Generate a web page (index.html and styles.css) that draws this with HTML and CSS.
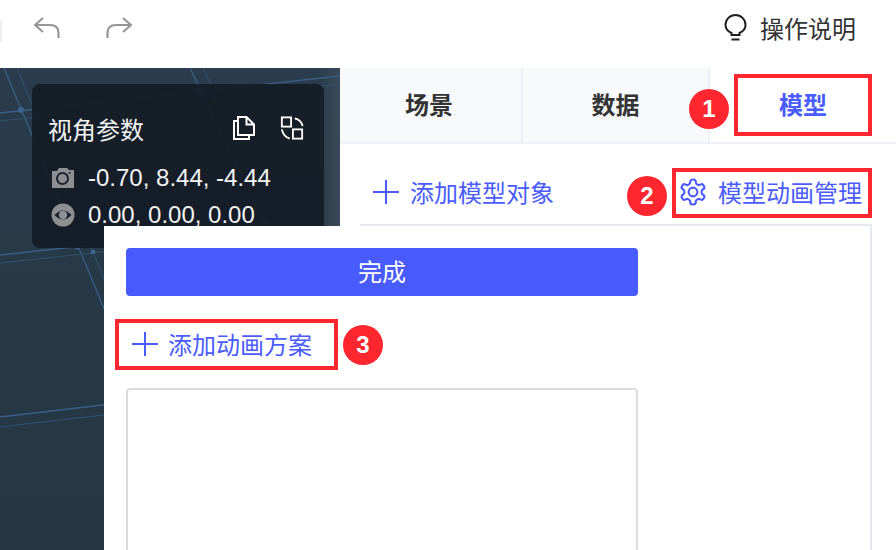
FILE: index.html
```html
<!DOCTYPE html>
<html lang="zh-CN">
<head>
<meta charset="utf-8">
<title>模型动画管理</title>
<link rel="stylesheet" href="styles.css">
</head>
<body>
<div class="app">
  <header class="topbar">
    <span class="edge-tab"></span>
    <div class="history">
      <svg class="history-icon" viewBox="0 0 26 22"><path d="M9 1 L1 8 L9 15 M1 8 H16 Q24.500 8 24.500 16 V21"/></svg>
      <svg class="history-icon" viewBox="0 0 26 22"><path d="M17 1 L25 8 L17 15 M25 8 H10 Q1.500 8 1.500 16 V21"/></svg>
    </div>
    <div class="help">
      <svg class="bulb" viewBox="0 0 24 28"><path d="M7.500 21 V19 C3.800 17.500 1.500 14.500 1.500 10.800 A10 9.800 0 0 1 21.500 10.800 C21.500 14.500 19.200 17.500 15.500 19 V21 Z M7.500 25.500 H15.500"/></svg>
      <span>操作说明</span>
    </div>
  </header>

  <main class="workspace">
    <section class="stage">
      <svg class="stage-grid" viewBox="0 0 340 482">
        <g class="grid-main">
          <path d="M0 45 L340 8"/>
          <path d="M0 187 L120 174"/>
          <path d="M0 349 L120 335"/>
          <path d="M4 0 L110 255"/>
          <path d="M190 0 L290 210"/>
        </g>
        <g class="grid-faint">
          <path d="M0 53 L340 16"/>
          <path d="M0 195 L120 182"/>
          <path d="M0 359 L120 345"/>
          <path d="M17 0 L125 262"/>
          <path d="M203 0 L300 205"/>
        </g>
        <circle class="grid-node" cx="21" cy="42" r="3"/>
        <circle class="grid-node" cx="200" cy="22" r="3"/>
        <circle class="grid-node" cx="37" cy="49" r="2.500"/>
        <circle class="grid-node" cx="215" cy="29" r="2.500"/>
        <circle class="grid-node" cx="77" cy="179" r="2.500"/>
        <circle class="grid-node" cx="93" cy="184" r="2.500"/>
        <circle class="grid-node" cx="264" cy="155" r="2.500"/>
      </svg>
      <div class="view-card">
        <div class="view-title">
          <span>视角参数</span>
          <div class="view-actions">
            <svg class="view-icon" viewBox="0 0 24 26"><path d="M5 6 H2 V24 H17 V20"/><path d="M6 2 H14.500 L22 9.500 V20 H6 Z M14.500 2 V9.500 H22"/></svg>
            <svg class="view-icon" viewBox="0 0 26 26"><rect x="2" y="1.500" width="10" height="10"/><rect x="14" y="14.500" width="10" height="10"/><path d="M16 2.500 Q23 4 24.500 11 M2 14.500 Q3.500 22 10.500 24.500"/></svg>
          </div>
        </div>
        <div class="view-row">
          <svg class="row-icon" viewBox="0 0 24 24"><path class="icon-fill" d="M1 5 H6 L8 2 H16 L18 4 H23 V22 H1 Z"/><circle class="icon-hole" cx="11.500" cy="12.500" r="5.500"/><circle class="icon-dot" cx="18.500" cy="7" r="1"/></svg>
          <span>-0.70, 8.44, -4.44</span>
        </div>
        <div class="view-row">
          <svg class="row-icon" viewBox="0 0 24 24"><circle class="icon-fill" cx="12" cy="12" r="11.500"/><path class="icon-eye" d="M3.500 12 Q12 3 20.500 12 Q12 21 3.500 12 Z"/><circle class="icon-fill" cx="12" cy="12" r="4.200"/></svg>
          <span>0.00, 0.00, 0.00</span>
        </div>
      </div>
    </section>

    <section class="panel">
      <nav class="tabs">
        <div class="tab">场景</div>
        <div class="tab">数据</div>
        <div class="tab tab-active">模型</div>
      </nav>
      <div class="panel-body">
        <div class="toolbar">
          <div class="action">
            <svg class="plus" viewBox="0 0 26 26"><path d="M13 1 V25 M0 13 H26"/></svg>
            <span>添加模型对象</span>
          </div>
          <div class="action action-manage">
            <svg class="gear" viewBox="0 0 24 24"><path d="M12.220 2h-.44a2 2 0 0 0-2 2v.18a2 2 0 0 1-1 1.730l-.43.25a2 2 0 0 1-2 0l-.15-.08a2 2 0 0 0-2.730.73l-.22.38a2 2 0 0 0 .73 2.730l.15.1a2 2 0 0 1 1 1.720v.51a2 2 0 0 1-1 1.740l-.15.09a2 2 0 0 0-.73 2.730l.22.38a2 2 0 0 0 2.730.73l.15-.08a2 2 0 0 1 2 0l.43.25a2 2 0 0 1 1 1.730V20a2 2 0 0 0 2 2h.44a2 2 0 0 0 2-2v-.18a2 2 0 0 1 1-1.730l.43-.25a2 2 0 0 1 2 0l.15.08a2 2 0 0 0 2.730-.73l.22-.39a2 2 0 0 0-.73-2.730l-.15-.08a2 2 0 0 1-1-1.740v-.5a2 2 0 0 1 1-1.740l.15-.09a2 2 0 0 0 .73-2.730l-.22-.38a2 2 0 0 0-2.730-.73l-.15.08a2 2 0 0 1-2 0l-.43-.25a2 2 0 0 1-1-1.730V4a2 2 0 0 0-2-2z"/><circle cx="12" cy="12" r="3.500"/></svg>
            <span>模型动画管理</span>
          </div>
        </div>
        <div class="object-box"></div>
      </div>
    </section>
  </main>

  <div class="modal">
    <button class="primary-btn" type="button">完成</button>
    <div class="action action-add">
      <svg class="plus" viewBox="0 0 26 26"><path d="M13 1 V25 M0 13 H26"/></svg>
      <span>添加动画方案</span>
    </div>
    <div class="scheme-box"></div>
  </div>

  <span class="callout callout-1"></span>
  <span class="callout callout-2"></span>
  <span class="callout callout-3"></span>
  <span class="badge badge-1">1</span>
  <span class="badge badge-2">2</span>
  <span class="badge badge-3">3</span>
</div>
</body>
</html>
```

FILE: styles.css
```css
* { box-sizing: border-box; }

html, body { margin: 0; padding: 0; }

body {
  font-family: "Noto Sans CJK SC", "Liberation Sans", sans-serif;
  font-size: 24px;
  color: #333;
  background: #fff;
}

.app {
  position: relative;
  width: 896px;
  height: 550px;
  overflow: hidden;
  display: flex;
  flex-direction: column;
}

/* top bar */
.topbar {
  position: relative;
  height: 68px;
  flex: none;
  display: flex;
  align-items: center;
  justify-content: space-between;
  padding: 0 40px 0 34px;
}

.edge-tab {
  position: absolute;
  left: 0;
  top: 20px;
  width: 2px;
  height: 22px;
  background: #f0f0f0;
}

.history {
  display: flex;
  gap: 46px;
  margin-top: -13px;
}

.history-icon {
  width: 26px;
  height: 22px;
  fill: none;
  stroke: #969696;
  stroke-width: 2.200;
}

.help {
  display: flex;
  align-items: center;
  gap: 12px;
  line-height: 34px;
  color: #333;
  margin-top: -13px;
}

.bulb {
  width: 24px;
  height: 28px;
  fill: none;
  stroke: #222;
  stroke-width: 2;
}

/* main */
.workspace {
  flex: 1;
  display: flex;
  min-height: 0;
}

.stage {
  position: relative;
  width: 340px;
  flex: none;
  padding: 16px 0 0 32px;
  background: linear-gradient(90deg, rgba(38, 55, 68, 0) 94%, #3a4a58 100%), linear-gradient(180deg, #2a3c4d 0%, #273846 45%, #263744 100%);
}

.stage-grid {
  position: absolute;
  left: 0;
  top: 0;
  width: 340px;
  height: 482px;
}

.grid-main path { fill: none; stroke: #3b5f86; stroke-width: 1.300; }
.grid-faint path { fill: none; stroke: #35516f; stroke-width: 1; }
.grid-node { fill: #3c6592; }

.view-card {
  position: relative;
  width: 292px;
  height: 164px;
  padding: 26px 20px 0 16px;
  border-radius: 8px;
  background: rgba(20, 28, 38, 0.93);
  color: #f2f3f4;
}

.view-title {
  display: flex;
  justify-content: space-between;
  align-items: center;
  height: 36px;
  margin-bottom: 13px;
}

.view-actions {
  display: flex;
  gap: 24px;
  align-items: center;
}

.view-icon {
  width: 24px;
  height: 26px;
  fill: none;
  stroke: #fff;
  stroke-width: 2;
}

.view-row {
  display: flex;
  align-items: center;
  gap: 13px;
  height: 37px;
  padding-left: 3px;
  font-family: "Liberation Sans", "Noto Sans CJK SC", sans-serif;
}

.row-icon { width: 24px; height: 24px; flex: none; }
.icon-fill { fill: #8d8f92; }
.icon-hole { fill: #8d8f92; stroke: #1a222d; stroke-width: 2; }
.icon-dot { fill: #1a222d; }
.icon-eye { fill: #1a222d; }

/* right panel */
.panel {
  flex: 1;
  min-width: 0;
  display: flex;
  flex-direction: column;
  background: #fff;
}

.tabs {
  display: grid;
  grid-template-columns: 183px 187px 1fr;
  height: 76px;
  flex: none;
  border-bottom: 2px solid #edf0f4;
}

.tab {
  display: flex;
  align-items: center;
  justify-content: center;
  padding-bottom: 3px;
  font-weight: 700;
  color: #333;
  background: #f7f9fb;
  border-right: 2px solid #edf0f4;
}

.tab:first-child { padding-right: 3px; }

.tab-active {
  color: #4a5cff;
  background: #fff;
  border-right: 0;
}

.panel-body {
  flex: 1;
  min-height: 0;
  display: flex;
  flex-direction: column;
  padding: 0 24px 0 20px;
}

.toolbar {
  height: 80px;
  flex: none;
  display: flex;
  align-items: center;
  justify-content: space-between;
  padding: 15px 10px 0 13px;
}

.action {
  display: flex;
  align-items: center;
  gap: 11px;
  color: #4a5cff;
  line-height: 34px;
}

.action-manage { gap: 10px; }

.plus {
  width: 26px;
  height: 26px;
  flex: none;
  fill: none;
  stroke: #4a5cff;
  stroke-width: 2;
}

.gear {
  width: 30px;
  height: 30px;
  flex: none;
  margin-top: 1px;
  fill: none;
  stroke: #4a5cff;
  stroke-width: 1.700;
}

.object-box {
  flex: 1;
  border-top: 2px solid #e6e8ee;
  border-right: 2px solid #e6e8ee;
}

/* modal */
.modal {
  position: absolute;
  left: 104px;
  top: 226px;
  width: 766px;
  bottom: 0;
  padding: 22px 0 0 22px;
  background: #fff;
  display: flex;
  flex-direction: column;
  align-items: flex-start;
}

.primary-btn {
  width: 512px;
  height: 48px;
  flex: none;
  border: 0;
  border-radius: 4px;
  background: #475bff;
  color: #fff;
  font: inherit;
  padding: 0 0 3px;
}

.action-add {
  height: 50px;
  margin: 23px 0 19px;
  padding-left: 6px;
  gap: 10px;
  flex: none;
}

.scheme-box {
  width: 512px;
  flex: 1;
  border: 2px solid #dcdcdc;
  border-bottom: 0;
  border-radius: 4px 4px 0 0;
}

/* annotations */
.callout {
  position: absolute;
  border: 4px solid #ff272f;
}

.callout-1 { left: 734px; top: 74px; width: 138px; height: 62px; }
.callout-2 { left: 672px; top: 168px; width: 200px; height: 50px; }
.callout-3 { left: 115px; top: 319px; width: 223px; height: 51px; }

.badge {
  position: absolute;
  width: 40px;
  height: 40px;
  border-radius: 50%;
  background: #ff272f;
  color: #fff;
  display: flex;
  align-items: center;
  justify-content: center;
  font: 700 24px "Liberation Sans", sans-serif;
}

.badge-1 { left: 689px; top: 89px; }
.badge-2 { left: 627px; top: 176px; }
.badge-3 { left: 343px; top: 325px; }
```
